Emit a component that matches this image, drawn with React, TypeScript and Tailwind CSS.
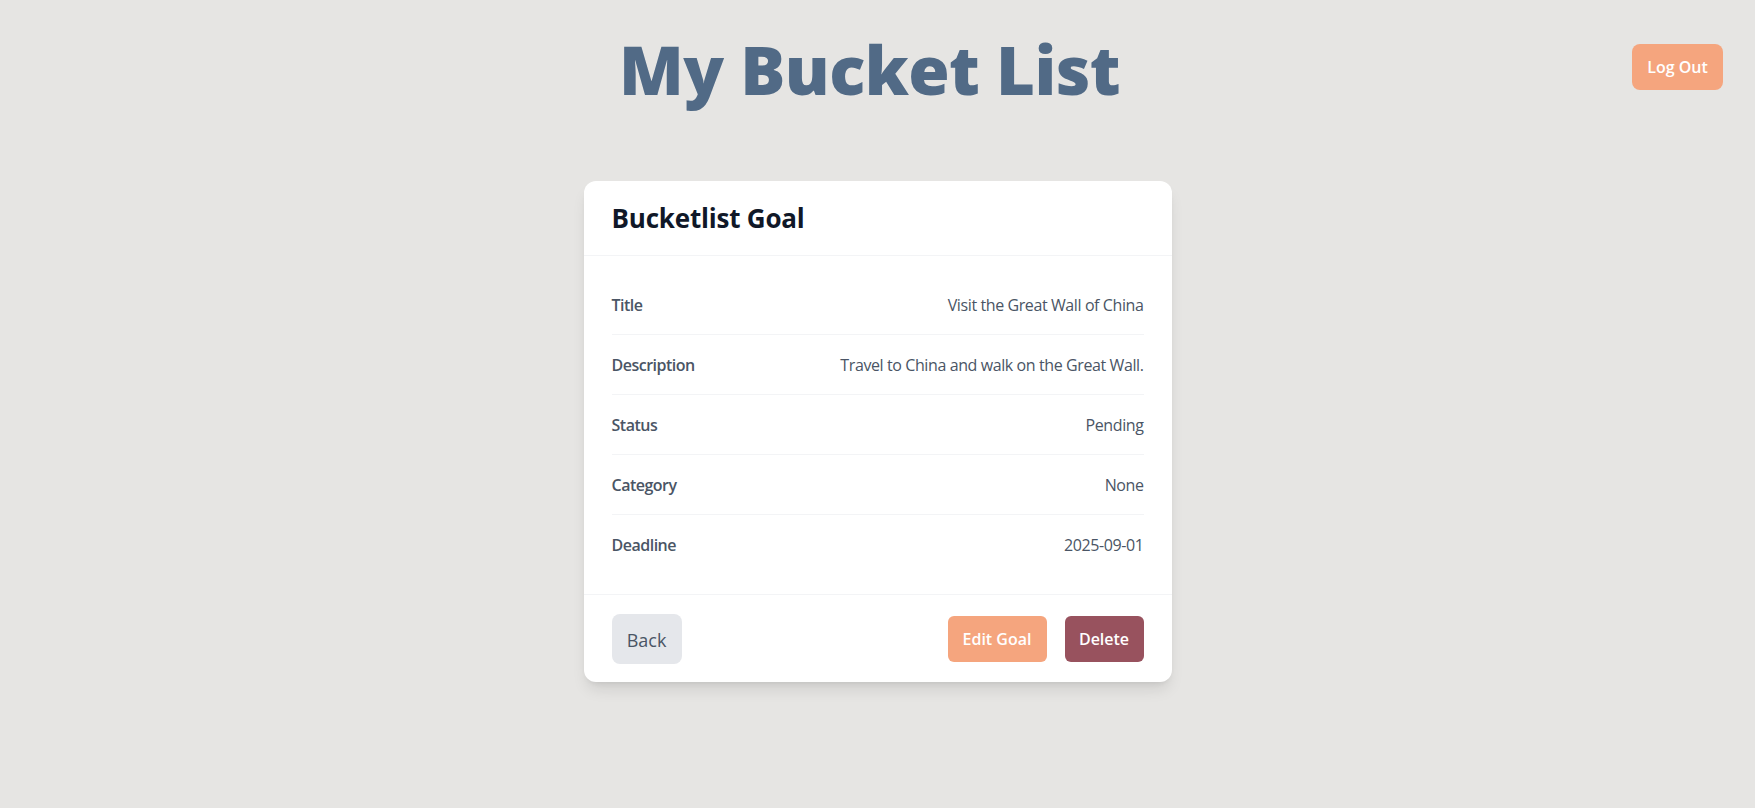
import React from "react";

const rows: { label: string; value: string }[] = [
  { label: "Title", value: "Visit the Great Wall of China" },
  { label: "Description", value: "Travel to China and walk on the Great Wall." },
  { label: "Status", value: "Pending" },
  { label: "Category", value: "None" },
  { label: "Deadline", value: "2025-09-01" },
];

export default function App() {
  return (
    <div className="min-h-screen w-full bg-[#e6e5e3] font-['Open_Sans','Noto_Sans',sans-serif] px-8 pt-9">
      <div className="grid grid-cols-[1fr_auto_1fr] items-start">
        <div />
        <h1 className="pr-4 text-[67px] leading-none font-extrabold text-[#516a86] tracking-[-0.6px]">
          My Bucket List
        </h1>
        <div className="flex justify-end">
          <button className="mt-2 h-[46px] w-[91px] rounded-lg bg-[#f5a57e] text-white text-[16px] font-semibold">
            Log Out
          </button>
        </div>
      </div>

      <div className="mx-auto mt-[78px] w-[588px] rounded-xl bg-white shadow-lg">
        <div className="border-b border-gray-100 px-7 py-5">
          <h2 className="text-[26px] leading-[34px] font-bold text-gray-900 tracking-[-0.2px]">
            Bucketlist Goal
          </h2>
        </div>
        <div className="px-7 pt-[19px] pb-[19px]">
          {rows.map((r, i) => (
            <div
              key={r.label}
              className={`flex h-[60px] items-center justify-between ${
                i < rows.length - 1 ? "border-b border-gray-100" : ""
              }`}
            >
              <span className="text-[16px] font-semibold tracking-[-0.5px] text-gray-600">{r.label}</span>
              <span className="text-[16px] tracking-[-0.4px] text-gray-600">{r.value}</span>
            </div>
          ))}
        </div>
        <div className="flex h-[88px] items-center justify-between border-t border-gray-100 px-7">
          <button className="h-[50px] w-[70px] rounded-lg bg-gray-200 pt-1 text-[18px] text-gray-600">
            Back
          </button>
          <div className="flex items-center gap-[18px]">
            <button className="h-[46px] w-[99px] rounded-md bg-[#f5a57e] text-[16px] font-semibold text-white">
              Edit Goal
            </button>
            <button className="h-[46px] w-[79px] rounded-md bg-[#98525e] text-[16px] font-semibold text-white">
              Delete
            </button>
          </div>
        </div>
      </div>
    </div>
  );
}
